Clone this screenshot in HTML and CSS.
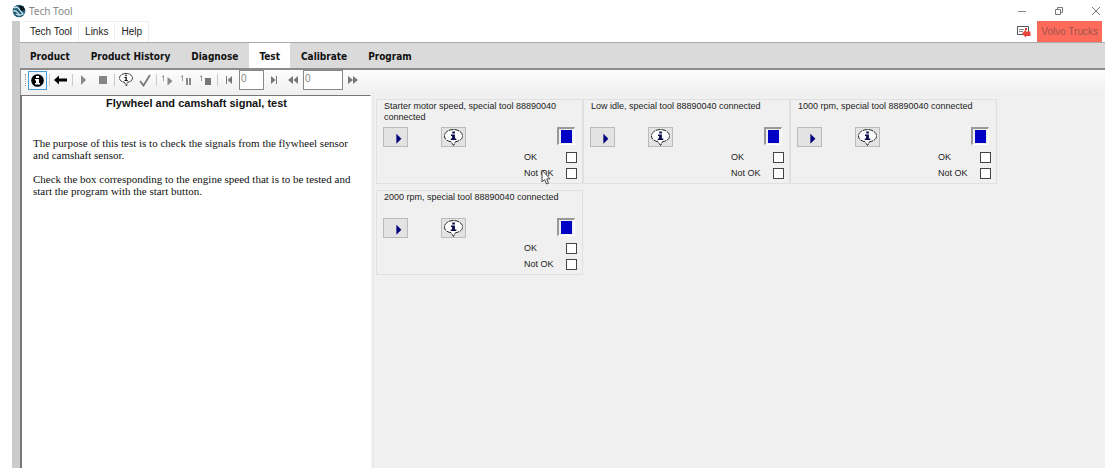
FILE: index.html
```html
<!DOCTYPE html>
<html lang="en">
<head>
<meta charset="utf-8">
<title>Tech Tool</title>
<link rel="stylesheet" href="styles.css">
</head>
<body>
<svg width="0" height="0" class="defs" aria-hidden="true">
  <symbol id="bubble" viewBox="0 0 20 17">
    <path d="M10 .5C5 .5 1 3.500 1 7c0 3 2.500 5 6.500 5.700L10 16.500l2-3.800c4-.5 7-2.700 7-5.700 0-3.500-4-6.500-9-6.500z" fill="#fff" stroke="#222" stroke-width="1" stroke-dasharray="5 .8"/>
    <path d="M8.800 2.500h2.600v2H8.800zM7.500 5.500h3.900v4h1.400V11H7.200V9.500h1.400V7H7.500z" fill="#0b0b4c"/>
  </symbol>
  <symbol id="start" viewBox="0 0 24 20"><path d="M13 6.500l5.500 5.500-5.500 5.500z" fill="#00007c"/></symbol>
</svg>
<header class="titlebar">
  <svg class="logo" width="14" height="14" viewBox="0 0 14 14"><circle cx="7" cy="7" r="6.300" fill="#245d78"/><path d="M2 4q3-2 5 1l4 5q-4 2-7 0M1 7q3-1 5 2l2 3" fill="none" stroke="#c9e4ee" stroke-width="1.300"/><path d="M7 2h4l2 4-4 1z" fill="#0c1720"/></svg>
  <h1>Tech Tool</h1>
  <div class="window-buttons">
    <button aria-label="Minimize"><svg width="10" height="10"><path d="M1 5.500h8" stroke="#888"/></svg></button>
    <button aria-label="Restore"><svg width="10" height="10" fill="none" stroke="#777"><path d="M1.500 3.500h5v5h-5zM3.500 3V1.500h5v5H7"/></svg></button>
    <button aria-label="Close"><svg width="10" height="10"><path d="M1 1l8 8M9 1L1 9" stroke="#777"/></svg></button>
  </div>
</header>
<div class="frame">
  <div class="menubar">
    <nav class="menu" aria-label="Menu"><button>Tech Tool</button><button>Links</button><button>Help</button></nav>
    <button class="message" aria-label="Messages"><svg width="14" height="12" viewBox="0 0 14 12"><path d="M.5.500h11v8H.5z" fill="#fff" stroke="#555"/><path d="M2 3.500h5M2 5.500h4" stroke="#888"/><path d="M8 2h2v2H8z" fill="#d33"/><path d="M5 7.500L9 3.500v2h4.500v4.500H9v1.800z" fill="#e8463c"/></svg></button>
    <button class="brand">Volvo Trucks</button>
  </div>
  <nav class="tabs" aria-label="Main">
    <a href="#">Product</a><a href="#">Product History</a><a href="#">Diagnose</a><a href="#" class="active" aria-current="page">Test</a><a href="#">Calibrate</a><a href="#">Program</a>
  </nav>
  <div class="toolbar">
    <span class="grip"></span>
    <button class="selected" aria-label="Information"><svg width="13" height="13"><circle cx="6.500" cy="6.500" r="6.300"/><path d="M5 2h3v2H5zM4 5h4v4h1v1.500H4V9h1V6.500H4z" fill="#fff"/></svg></button>
    <span class="sep"></span>
    <button aria-label="Back"><svg width="13" height="10"><path d="M0 5l5-4.500v3h8v3H5v3z"/></svg></button>
    <span class="sep"></span>
    <button aria-label="Start"><svg width="7" height="10"><path d="M1 0l5 5-5 5z" fill="#888"/></svg></button>
    <button aria-label="Stop"><svg width="8" height="8"><path d="M0 0h8v8H0z" fill="#858585"/></svg></button>
    <span class="sep"></span>
    <button aria-label="Help text"><svg width="14" height="14" viewBox="0 0 14 14"><path d="M7 .5C3.300.500.500 2.500.500 5c0 2.400 2 3.700 4.800 4.200L7.500 13l.8-3.700c3.200-.3 5.200-2 5.200-4.300C13.500 2.500 10.700.500 7 .5z" fill="#fff" stroke="#333" stroke-dasharray="4 .6"/><path d="M6.300 1.800h1.500v1.400H6.300zM5.500 4h2.300v3h1v1H5.500V7h1V5h-1z" fill="#111"/></svg></button>
    <button aria-label="Confirm"><svg width="12" height="13"><path d="M1 7l3.500 4.500L11 1" fill="none" stroke="#777" stroke-width="1.800"/></svg></button>
    <span class="sep"></span>
    <button aria-label="Single start"><svg width="11" height="11"><path d="M5.500 2l5 4-5 4.500z" fill="#888"/><path d="M0 2L1.500.500V6" fill="none" stroke="#999"/></svg></button>
    <button aria-label="Single pause"><svg width="11" height="11"><path d="M5 3h2v7H5zM8 3h2v7H8z" fill="#888"/><path d="M0 2L1.500.500V6" fill="none" stroke="#999"/></svg></button>
    <button aria-label="Single stop"><svg width="11" height="11"><path d="M5 3h6v7H5z" fill="#777"/><path d="M0 2L1.500.500V6" fill="none" stroke="#999"/></svg></button>
    <span class="sep"></span>
    <button aria-label="First"><svg width="8" height="8"><path d="M1 0h1v8H1zM7 0v8L2.500 4z" fill="#777"/></svg></button>
    <input class="short" type="text" value="0" aria-label="Step">
    <button aria-label="Last"><svg width="8" height="8"><path d="M6 0h1v8H6zM1 0v8l4.500-4z" fill="#777"/></svg></button>
    <button aria-label="Rewind"><svg width="10" height="8"><path d="M5 0v8L0 4zM10 0v8L5.500 4z" fill="#777"/></svg></button>
    <input class="long" type="text" value="0" aria-label="Position">
    <button aria-label="Forward"><svg width="10" height="8"><path d="M0 0v8l5-4zM5 0v8l5-4z" fill="#777"/></svg></button>
  </div>
  <main>
    <section class="description">
      <h2>Flywheel and camshaft signal, test</h2>
      <p>The purpose of this test is to check the signals from the flywheel sensor<br>and camshaft sensor.</p>
      <p>Check the box corresponding to the engine speed that is to be tested and<br>start the program with the start button.</p>
    </section>
    <section class="tests">
      <article class="card">
        <h3>Starter motor speed, special tool 88890040 connected</h3>
        <div class="actions"><button aria-label="Start"><svg width="23" height="18"><use href="#start"/></svg></button><button aria-label="Information"><svg width="21" height="17"><use href="#bubble"/></svg></button><span class="status"></span></div>
        <label>OK<input type="checkbox"></label>
        <label>Not OK<input type="checkbox"></label>
        <svg class="cursor" width="10" height="16" viewBox="0 0 10 16"><path d="M1 1v12l2.600-2.500L5.500 15l2-.8-1.800-4.300H9z" fill="#fff" stroke="#444"/></svg>
      </article>
      <article class="card">
        <h3>Low idle, special tool 88890040 connected</h3>
        <div class="actions"><button aria-label="Start"><svg width="23" height="18"><use href="#start"/></svg></button><button aria-label="Information"><svg width="21" height="17"><use href="#bubble"/></svg></button><span class="status"></span></div>
        <label>OK<input type="checkbox"></label>
        <label>Not OK<input type="checkbox"></label>
      </article>
      <article class="card">
        <h3>1000 rpm, special tool 88890040 connected</h3>
        <div class="actions"><button aria-label="Start"><svg width="23" height="18"><use href="#start"/></svg></button><button aria-label="Information"><svg width="21" height="17"><use href="#bubble"/></svg></button><span class="status"></span></div>
        <label>OK<input type="checkbox"></label>
        <label>Not OK<input type="checkbox"></label>
      </article>
      <article class="card">
        <h3>2000 rpm, special tool 88890040 connected</h3>
        <div class="actions"><button aria-label="Start"><svg width="23" height="18"><use href="#start"/></svg></button><button aria-label="Information"><svg width="21" height="17"><use href="#bubble"/></svg></button><span class="status"></span></div>
        <label>OK<input type="checkbox"></label>
        <label>Not OK<input type="checkbox"></label>
      </article>
    </section>
  </main>
</div>
</body>
</html>
```
FILE: styles.css
```css
* { box-sizing: border-box; }
html, body { height: 100%; }
body { margin: 0; display: flex; flex-direction: column; background: #fff; color: #222; font-family: "Liberation Sans", Arial, sans-serif; font-size: 10px; }
button { margin: 0; padding: 0; border: 0; background: none; font: inherit; color: inherit; display: flex; align-items: center; justify-content: center; }
h1, h2, h3, p { margin: 0; }
svg { display: block; flex: none; }
.defs { display: none; }
.titlebar { display: flex; align-items: center; flex: none; height: 21px; padding-left: 12px; }
.titlebar h1 { margin-left: 3px; font: 10px/20px "Noto Sans", sans-serif; color: #888; }
.window-buttons { display: flex; gap: 27px; margin-left: auto; padding-right: 4px; }
.frame { flex: 1; display: flex; flex-direction: column; margin-left: 12px; border-left: 8px solid #cbcbcb; }
.menubar { display: flex; align-items: stretch; flex: none; height: 21px; padding: 0 3px 0 4px; }
.menu { display: flex; margin-right: auto; }
.menu button { padding: 0 6px 2px; border-top: 1px solid #efefef; border-right: 1px solid #efefef; }
.message { margin-right: 6px; }
.brand { padding: 0 4px; background: #ff6b5b; color: #9c554d; }
.tabs { display: flex; gap: 1px; flex: none; height: 28px; border-top: 1px solid #aaa; border-bottom: 2px solid #8b8b8b; background: #dadada; }
.tabs a { display: flex; align-items: center; padding: 1px 10px 0; color: #111; font: bold 10px "DejaVu Sans Condensed", "DejaVu Sans", sans-serif; text-decoration: none; }
.tabs .active { background: #fff; }
.toolbar { display: flex; align-items: center; flex: none; height: 25px; padding: 0 2px 5px; background: linear-gradient(#fdfdfd, #efefef); border-left: 1px solid #999; }
.toolbar button { width: 19px; height: 19px; flex: none; }
.toolbar .selected { border: 1px solid #4a9ad4; background: #edf6fc; }
.grip { width: 1px; height: 12px; margin: 0 2px; border-left: 1px dotted #999; }
.sep { width: 1px; height: 12px; margin: 0 1px 0 2px; background: #ccc; }
.toolbar input { height: 20px; padding: 0 1px 3px; border: 1px solid #888; background: #fff; font: 10px "Liberation Sans", sans-serif; color: #888; }
.toolbar .short { width: 25px; margin-left: 1px; }
.toolbar .long { width: 40px; margin-left: 1px; }
main { flex: 1; display: flex; background: #f0f0f0; }
.description { flex: none; width: 351px; padding: 1px 10px 0 11px; border: solid #777; border-width: 1px 0 0 2px; border-right: 1px solid #fff; background: #fff; color: #111; font: 11px/12px "Liberation Serif", "Times New Roman", serif; }
.description h2 { margin-bottom: 27px; text-align: center; font: bold 11px/13px "Liberation Sans", Arial, sans-serif; }
.description p { margin-bottom: 12px; }
.tests { flex: 1; display: grid; grid-template-columns: repeat(auto-fill, 207px); grid-auto-rows: max-content; gap: 6px 0; margin-left: 2px; padding: 4px 0 0 2px; border-left: 1px solid #e6e6e6; }
.card { position: relative; padding: 1px 5px 2px 6px; border: 1px solid #e0e0e0; }
.card h3 { min-height: 22px; margin-bottom: 4px; padding: 0 8px 0 1px; font-size: 9px; font-weight: normal; line-height: 11px; }
.actions { display: flex; margin: 0 2px 2px 0; }
.actions button { width: 25px; height: 20px; margin-right: 33px; border: 1px solid #bbb; background: #e3e3e4; }
.status { width: 18px; height: 18px; margin-left: auto; border: 2px solid #999; border-right: 1px solid #fff; border-bottom: 1px solid #fff; padding: 1px 2px; background: #0000c4 content-box; }
.card label { display: grid; grid-template-columns: 42px 11px; justify-content: end; align-items: center; height: 16px; font-size: 9px; }
.card input { appearance: none; width: 11px; height: 11px; margin: 0; border: 1px solid #444; background: #fff; }
.card input:checked { background: #0000c4 content-box; padding: 2px; }
.cursor { position: absolute; left: 164px; top: 69px; }
```
